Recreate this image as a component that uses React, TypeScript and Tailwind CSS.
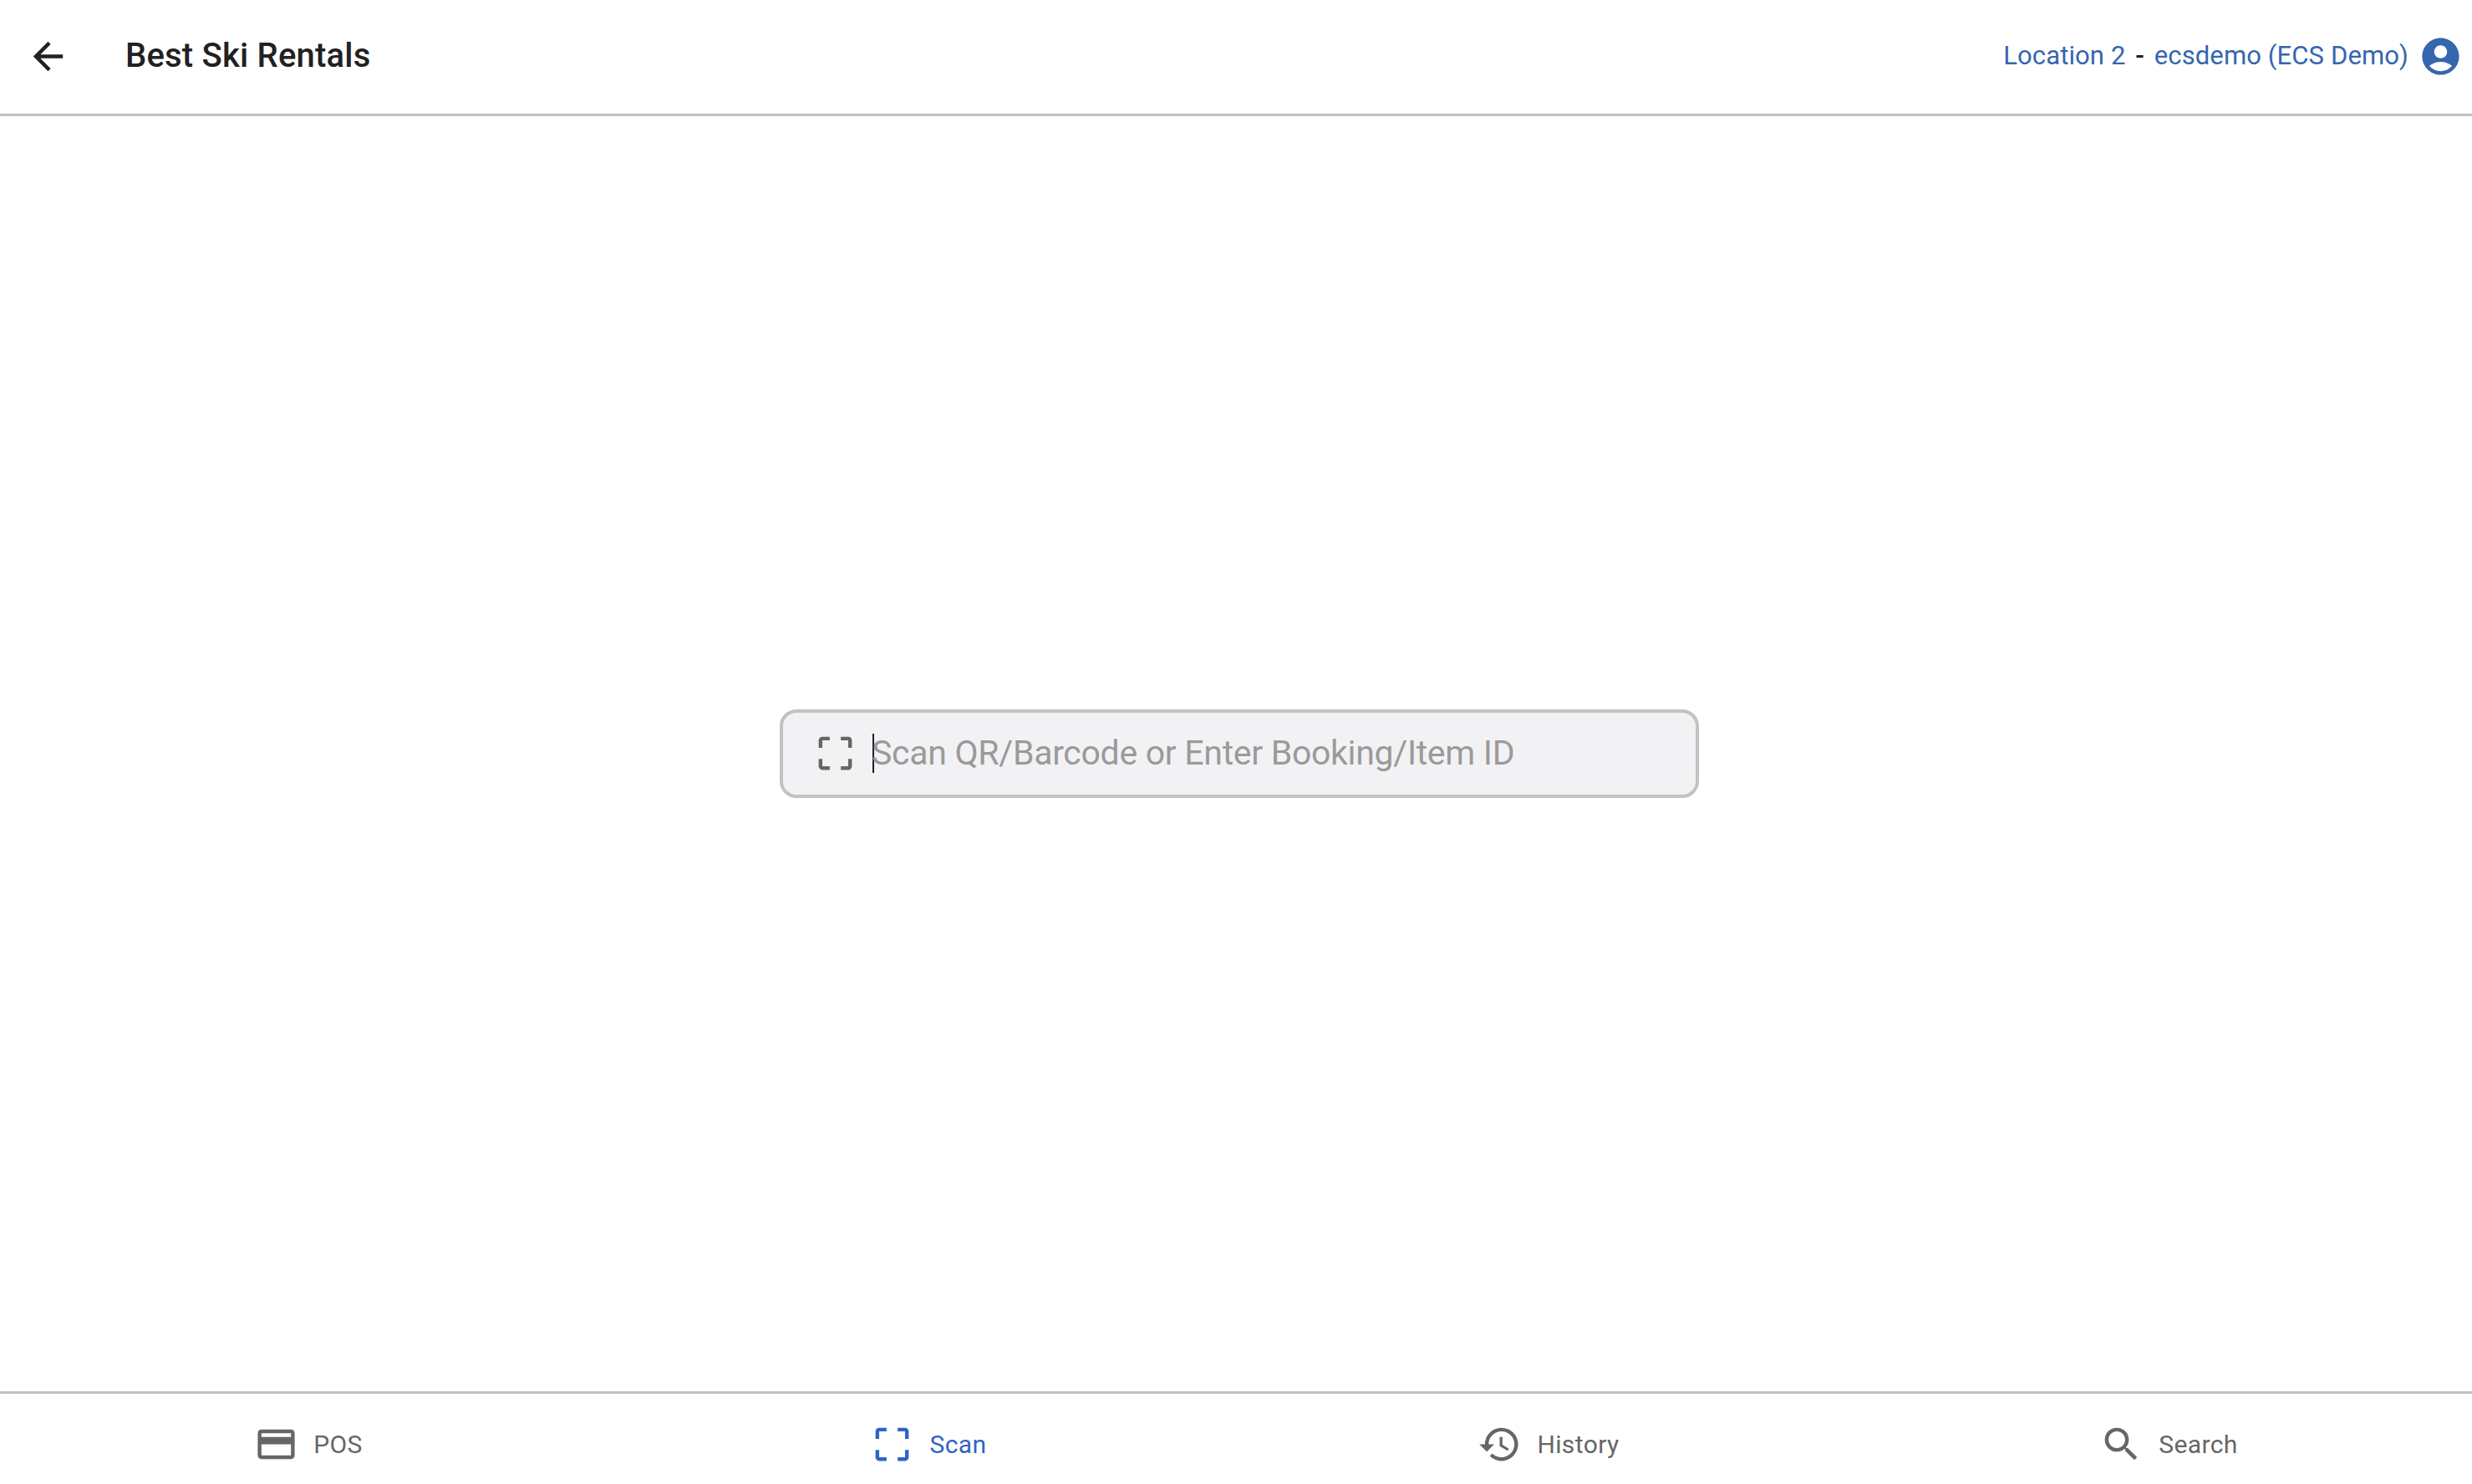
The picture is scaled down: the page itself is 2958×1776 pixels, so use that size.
import { MdAccountCircle, MdArrowBack, MdCreditCard, MdCropFree, MdHistory, MdSearch } from 'react-icons/md';

const navItems = [
  { label: 'POS', icon: MdCreditCard, active: false },
  { label: 'Scan', icon: MdCropFree, active: true },
  { label: 'History', icon: MdHistory, active: false },
  { label: 'Search', icon: MdSearch, active: false },
];

export default function App() {
  return (
    <div className="flex h-screen flex-col overflow-hidden bg-white font-['Roboto',sans-serif]">
      {/* Header */}
      <header className="flex h-[139px] flex-shrink-0 items-center justify-between border-b-[3px] border-[#c2c2c2] pb-[2px] pl-[31px] pr-[11px]">
        <div className="flex items-center gap-[66px]">
          <MdArrowBack className="h-[53px] w-[53px] text-[#212121]" />
          <h1 className="text-[40px] font-medium tracking-[0.2px] text-[#212121]">Best Ski Rentals</h1>
        </div>
        <div className="flex items-center gap-[12px]">
          <div className="text-[31px] tracking-[0.12px] text-[#3566ae]">
            Location 2 <span className="px-[4px] font-medium text-[#212121]">-</span> ecsdemo (ECS Demo)
          </div>
          <MdAccountCircle className="h-[53px] w-[53px] text-[#3566ae]" />
        </div>
      </header>

      {/* Scan field */}
      <main className="flex flex-1 items-center justify-center pb-[1px] pl-[8px]">
        <div className="flex h-[106px] w-[1100px] items-center rounded-[20px] border-[4px] border-[#c2c2c2] bg-[#f2f2f4] pl-[36px]">
          <MdCropFree className="h-[53px] w-[53px] flex-shrink-0 text-[#666666]" />
          <span className="ml-[18px] h-[47px] w-[2px] flex-shrink-0 bg-[#212121]" />
          <div className="-ml-[3px] text-[41px] tracking-[-0.3px] text-[#9a9a9a]">Scan QR/Barcode or Enter Booking/Item ID</div>
        </div>
      </main>

      {/* Bottom nav */}
      <nav className="grid h-[111px] flex-shrink-0 grid-cols-[repeat(4,742px)] justify-center border-t-[3px] border-[#c2c2c2] pl-[6px] pt-[12px]">
        {navItems.map(({ label, icon: Icon, active }) => (
          <div key={label} className={`flex items-center justify-center gap-[18px] ${active ? 'text-[#3064c4]' : 'text-[#666666]'}`}>
            <Icon className="h-[53px] w-[53px]" />
            <span className="text-[30px] tracking-[0.4px]">{label}</span>
          </div>
        ))}
      </nav>
    </div>
  );
}
